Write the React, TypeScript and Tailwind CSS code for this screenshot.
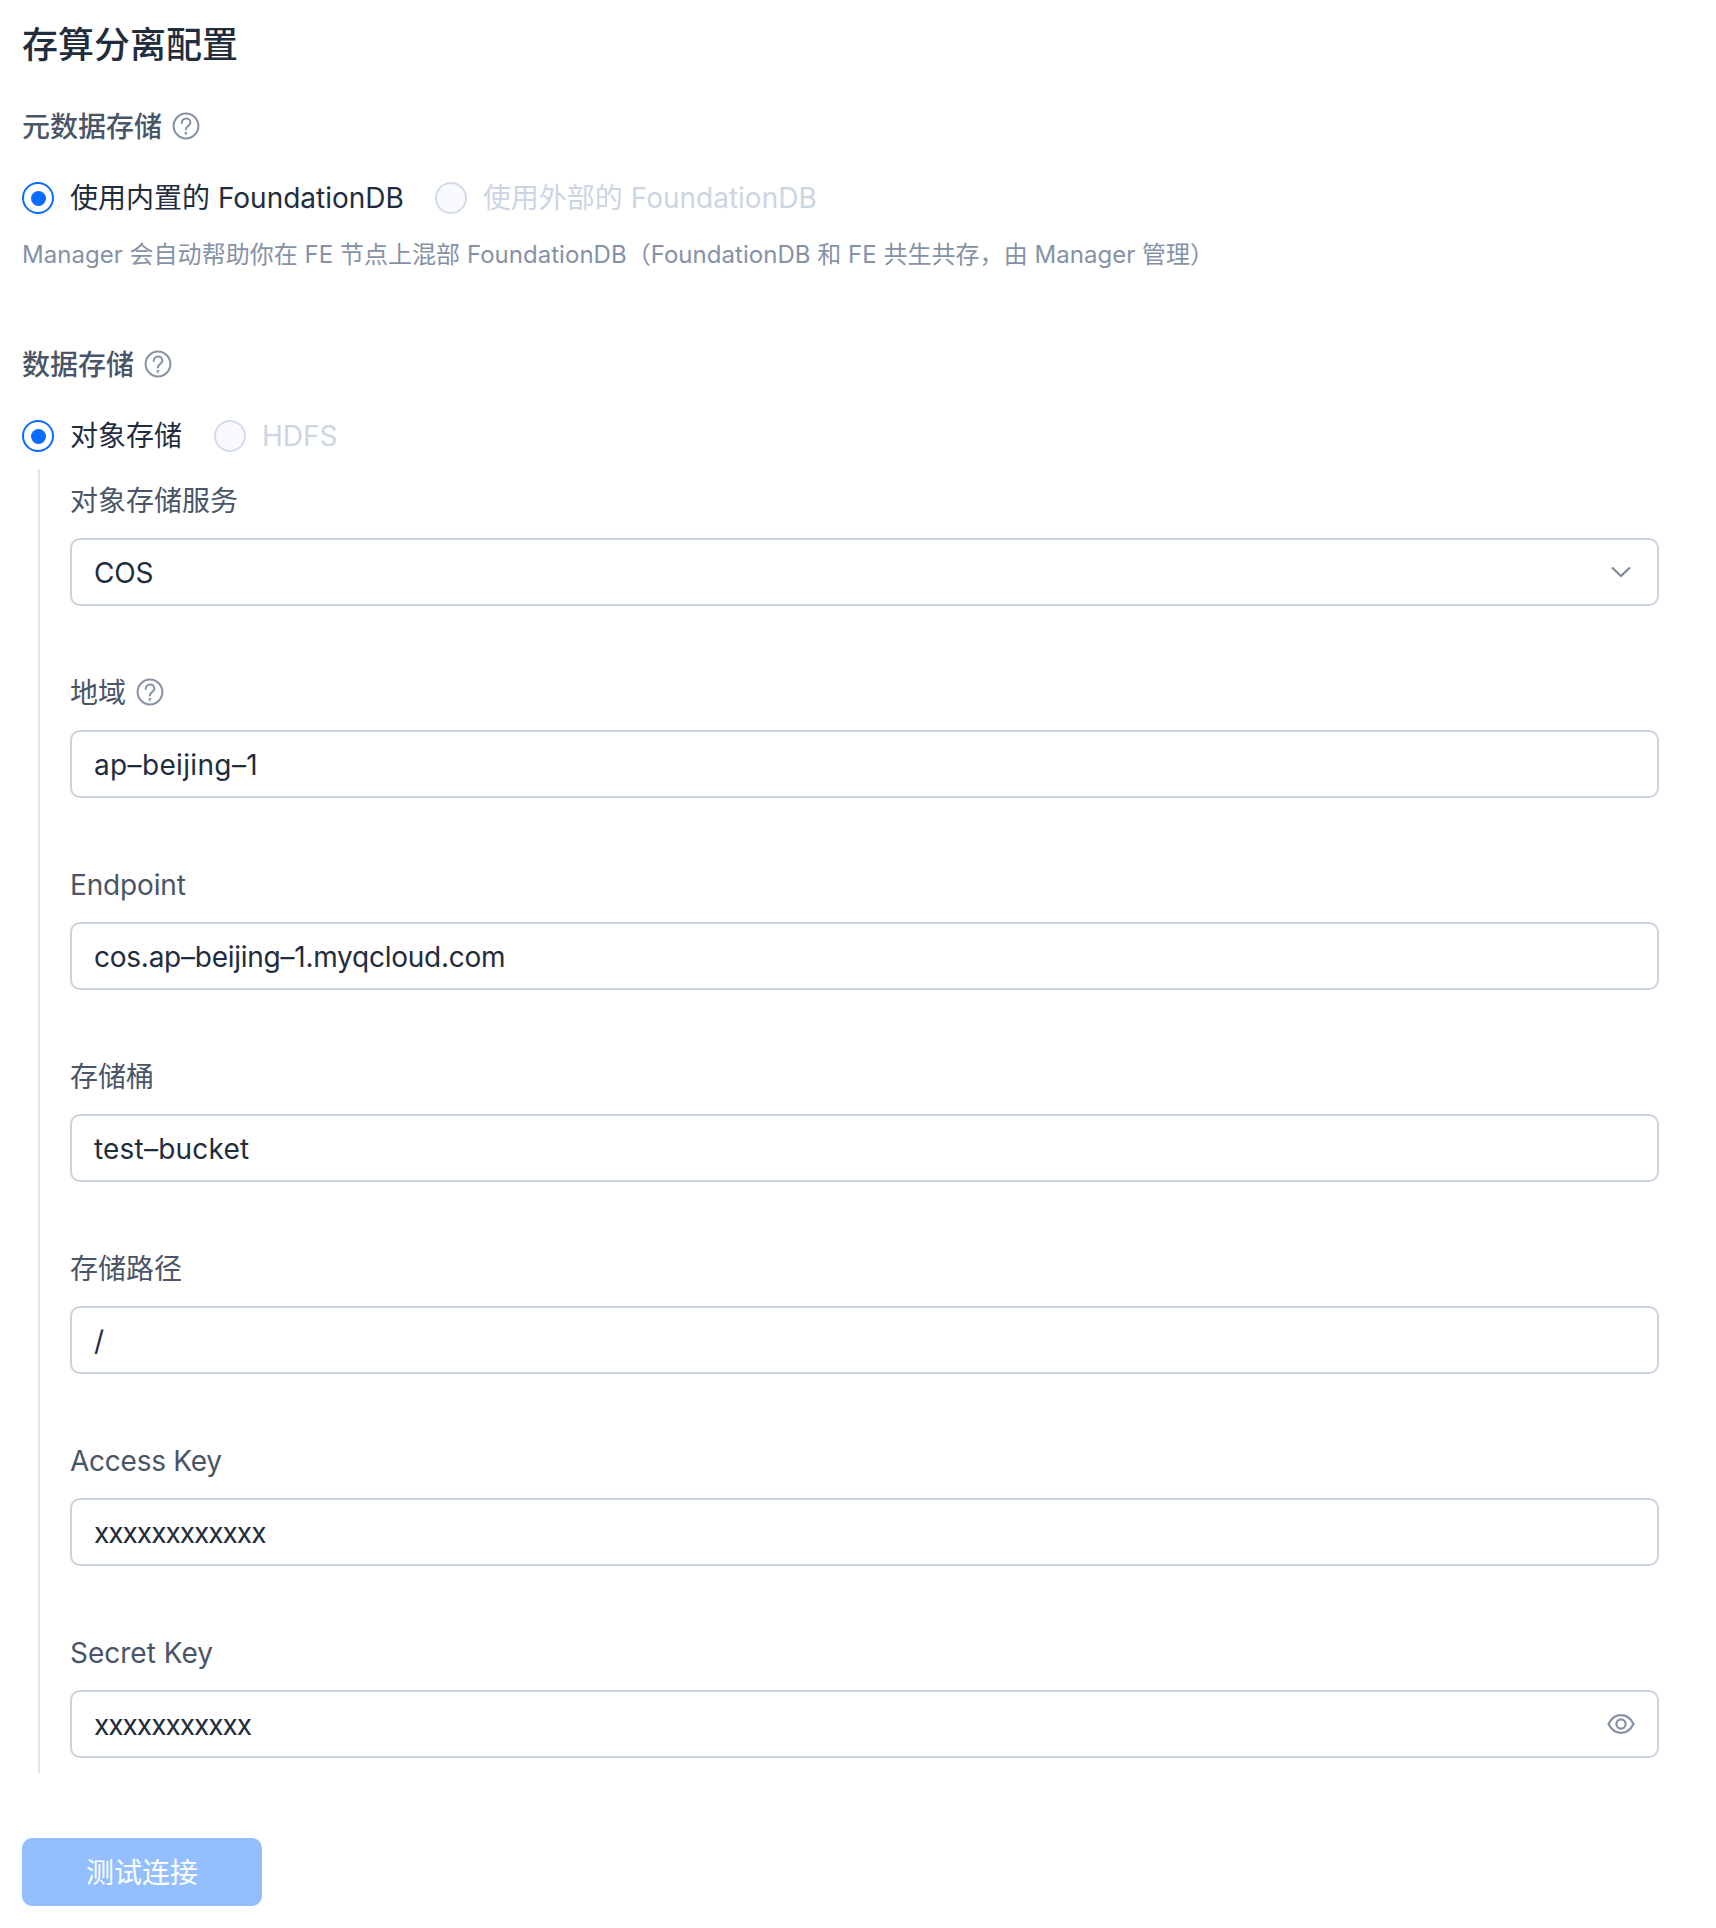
import React from "react";

const font = { fontFamily: 'Inter, "Noto Sans CJK SC", sans-serif' };

function Help() {
  return (
    <svg width="28" height="28" viewBox="0 0 28 28" fill="none" stroke="#8592a6" strokeWidth="2" strokeLinecap="round" className="shrink-0">
      <circle cx="14" cy="14" r="12.4" />
      <path d="M9.700 11c0-2.600 1.900-4.400 4.400-4.400s4.300 1.700 4.300 4c0 1.900-1.200 2.900-2.600 3.800-1.300.8-1.900 1.600-1.900 3.200" />
      <circle cx="13.900" cy="21.200" r="0.500" fill="#8592a6" />
    </svg>
  );
}

function Radio({ label, checked }: { label: string; checked?: boolean }) {
  return (
    <div className="flex items-center gap-4 h-10">
      {checked ? (
        <span className="w-8 h-8 rounded-full border-2 border-[#0a6cff] bg-white flex items-center justify-center">
          <span className="w-[15px] h-[15px] rounded-full bg-[#0a6cff]" />
        </span>
      ) : (
        <span className="w-8 h-8 rounded-full border-2 border-[#d3dbe8] bg-[#f8fafd]" />
      )}
      <span className={checked ? "text-[28px] text-[#1f2d3d]" : "text-[28px] text-[#ccd5e3]"}>{label}</span>
    </div>
  );
}

function Field({
  label,
  value,
  help,
  right,
  last,
  inputClass = "tracking-[-0.2px]",
  labelClass = "",
}: {
  label: string;
  value: string;
  help?: boolean;
  right?: React.ReactNode;
  last?: boolean;
  inputClass?: string;
  labelClass?: string;
}) {
  return (
    <div className={last ? "" : "pb-[66px]"}>
      <div className="flex items-center gap-[10px] h-10 mb-[18px] text-[28px] text-[#4a5568]">
        <span className={`pt-[2px] ${labelClass}`}>{label}</span>
        {help && <Help />}
      </div>
      <div className="h-[68px] rounded-[10px] border-2 border-[#c9d3e2] bg-white flex items-center pl-[22px] pr-[26px]">
        <input
          readOnly
          value={value}
          className={`flex-1 min-w-0 pt-px bg-transparent outline-none text-[28px] text-[#1f2d3d] ${inputClass}`}
          style={font}
        />
        {right}
      </div>
    </div>
  );
}

export default function App() {
  return (
    <div className="min-h-screen bg-white px-[22px] pt-5 pb-[22px]" style={font}>
      <h1 className="h-[50px] leading-[50px] text-[36px] font-medium text-[#1f2d3d]">存算分离配置</h1>

      <div className="mt-9 h-10 flex items-center gap-[10px] text-[28px] font-medium text-[#4a5568]">
        <span className="pt-[2px]">元数据存储</span>
        <Help />
      </div>
      <div className="mt-8 flex gap-[31px]">
        <Radio checked label="使用内置的 FoundationDB" />
        <Radio label="使用外部的 FoundationDB" />
      </div>
      <p className="mt-[19px] h-9 leading-9 text-[24px] tracking-[0.03px] text-[#8592a6] whitespace-nowrap">
        Manager 会自动帮助你在 FE 节点上混部 FoundationDB（FoundationDB 和 FE 共生共存，由 Manager 管理）
      </p>

      <div className="mt-[71px] h-10 flex items-center gap-[10px] text-[28px] font-medium text-[#4a5568]">
        <span className="pt-[2px]">数据存储</span>
        <Help />
      </div>
      <div className="mt-8 flex gap-8">
        <Radio checked label="对象存储" />
        <Radio label="HDFS" />
      </div>

      <div className="mt-[13px] ml-4 mr-[35px] border-l-2 border-[#dfe6ef] pl-[30px] pt-[11px] pb-[15px]">
        <Field
          label="对象存储服务"
          value="COS"
          right={
            <svg width="20" height="12" viewBox="0 0 20 12" fill="none" stroke="#7d8a9c" strokeWidth="2.2" className="shrink-0">
              <path d="M1 1.500l9 8.500 9-8.500" />
            </svg>
          }
        />
        <Field label="地域" value="ap–beijing–1" help inputClass="tracking-[0.35px]" />
        <Field label="Endpoint" labelClass="tracking-[-0.15px]" value="cos.ap–beijing–1.myqcloud.com" inputClass="tracking-[-0.25px]" />
        <Field label="存储桶" value="test–bucket" inputClass="tracking-[0.2px]" />
        <Field label="存储路径" value="/" />
        <Field label="Access Key" labelClass="tracking-[-0.25px]" value="xxxxxxxxxxxx" inputClass="tracking-[-1px]" />
        <Field
          last
          label="Secret Key"
          value="xxxxxxxxxxx"
          inputClass="tracking-[-1px]"
          right={
            <svg width="28" height="22" viewBox="0 0 28 22" fill="none" stroke="#8592a6" strokeWidth="2.2" className="shrink-0 mr-[-4px]">
              <path d="M1.500 11C4.500 5.200 9 2.200 14 2.200S23.500 5.200 26.500 11C23.500 16.800 19 19.800 14 19.800S4.500 16.800 1.500 11Z" />
              <circle cx="14" cy="11" r="4.600" />
            </svg>
          }
        />
      </div>

      <button className="mt-[65px] w-[240px] h-[68px] pt-[2px] rounded-[10px] bg-[#94bfff] text-white text-[28px]">测试连接</button>
    </div>
  );
}
